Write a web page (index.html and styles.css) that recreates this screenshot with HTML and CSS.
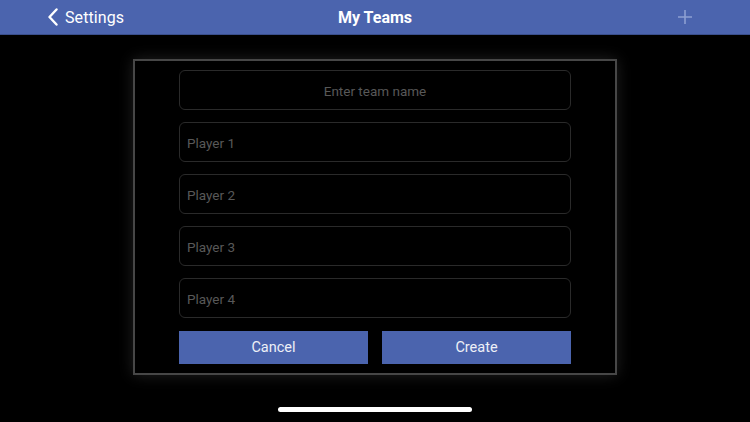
FILE: index.html
```html
<!DOCTYPE html>
<html>
<head>
<meta charset="utf-8">
<link rel="stylesheet" href="styles.css">
</head>
<body>
<header class="navbar">
  <div class="nav-left">
    <svg class="chevron" width="12" height="18" viewBox="0 0 12 18"><path d="M9.5 1.5 L2.5 9 L9.5 16.5" fill="none" stroke="#ffffff" stroke-width="2.4" stroke-linecap="round" stroke-linejoin="round"/></svg>
    <span class="back-label">Settings</span>
  </div>
  <div class="nav-title">My Teams</div>
  <div class="nav-right">
    <svg width="16" height="16" viewBox="0 0 16 16"><path d="M8 1 V15 M1 8 H15" stroke="#8d9fd2" stroke-width="1.6"/></svg>
  </div>
</header>
<main class="content">
  <section class="panel">
    <div class="field center"><span class="ph">Enter team name</span></div>
    <div class="field"><span class="ph">Player 1</span></div>
    <div class="field"><span class="ph">Player 2</span></div>
    <div class="field"><span class="ph">Player 3</span></div>
    <div class="field"><span class="ph">Player 4</span></div>
    <div class="buttons">
      <button class="btn">Cancel</button>
      <button class="btn">Create</button>
    </div>
  </section>
</main>
<div class="home-indicator"></div>
</body>
</html>
```
FILE: styles.css
```css
html, body {
  margin: 0;
  padding: 0;
  background: #000;
  width: 750px;
  height: 422px;
  overflow: hidden;
  font-family: Roboto, "Liberation Sans", sans-serif;
}
.navbar {
  height: 35px;
  background: #4b64ae;
  display: flex;
  align-items: center;
  border-bottom: 1px solid #3a4f8c;
  box-sizing: border-box;
}
.nav-left {
  display: flex;
  align-items: center;
  padding-left: 47px;
  gap: 6px;
  width: 200px;
  box-sizing: border-box;
}
.chevron { display: block; }
.back-label {
  color: #fff;
  font-size: 16px;
  letter-spacing: 0.1px;
}
.nav-title {
  flex: 1;
  text-align: center;
  color: #fff;
  font-size: 16px;
  font-weight: 700;
}
.nav-right {
  width: 200px;
  display: flex;
  justify-content: flex-end;
  padding-right: 57px;
  box-sizing: border-box;
}
.nav-right svg { display: block; }
.content {
  padding-top: 24px;
  padding-left: 133px;
}
.panel {
  width: 484px;
  height: 316px;
  box-sizing: border-box;
  border: 2px solid #474747;
  box-shadow: 0 0 14px rgba(255, 255, 255, 0.13);
  padding: 9px 44px 0 44px;
  display: flex;
  flex-direction: column;
  gap: 12px;
}
.field {
  height: 40px;
  box-sizing: border-box;
  border: 1px solid #2a2a2a;
  border-radius: 6px;
  display: flex;
  align-items: center;
  padding-left: 7px;
}
.field.center { justify-content: center; padding-left: 0; }
.ph {
  color: #585858;
  font-size: 13.5px;
  padding-top: 1px;
}
.buttons {
  display: flex;
  gap: 14px;
  margin-top: 1px;
}
.btn {
  flex: 1;
  height: 33px;
  border: none;
  background: #4b64ae;
  color: #eef0f7;
  font-family: Roboto, "Liberation Sans", sans-serif;
  font-size: 14.5px;
  padding: 0;
}
.home-indicator {
  width: 194px;
  height: 5px;
  border-radius: 3px;
  background: #fff;
  margin: 32px auto 0;
}
```
